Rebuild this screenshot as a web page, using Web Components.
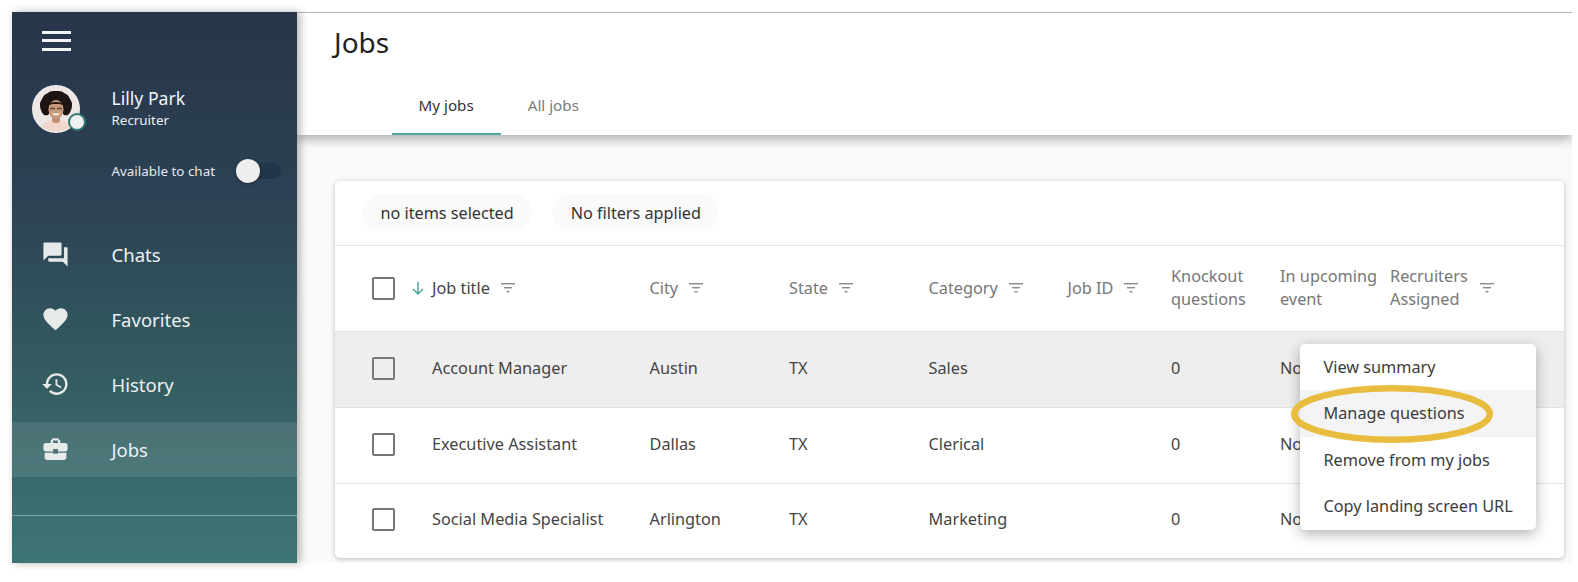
<!DOCTYPE html>
<html><head><meta charset="utf-8">
<style>
html,body{margin:0;padding:0;background:#fff;width:1578px;height:582px;overflow:hidden;font-family:"Noto Sans","Open Sans",sans-serif}
</style></head>
<body>
<jobs-app></jobs-app>
<script>
const FILTER='<svg width="16" height="12" viewBox="0 0 16 12" fill="#8a8a8a"><rect x="1" y="1" width="14" height="1.4"/><rect x="4" y="5" width="8" height="1.4"/><rect x="6.5" y="9" width="3" height="1.4"/></svg>';
function def(name,html){customElements.define(name,class extends HTMLElement{constructor(){super();this.attachShadow({mode:'open'}).innerHTML=html}})}

def('side-item',`<style>
:host{display:flex;align-items:center;height:55px;color:#eef1f1;font-size:18.5px;padding-left:29px;flex:none}
:host([active]){background:rgba(255,255,255,.1)}
.i{width:29px;height:29px;margin-right:42px;display:flex;align-items:center;justify-content:center;flex:none}
</style><span class="i"><slot name="icon"></slot></span><span><slot></slot></span>`);

def('app-sidebar',`<style>
:host{display:flex;flex-direction:column;width:285.5px;flex:none;background:linear-gradient(180deg,#28354a 0%,#2c4255 35%,#33595f 62%,#3d7574 100%);color:#fff;position:relative;z-index:3;box-shadow:3px 0 8px rgba(0,0,0,.3)}
.burger{margin:19px 0 0 30px;width:29px;height:20px;display:flex;flex-direction:column;justify-content:space-between}
.burger i{display:block;height:3px;background:#f2f4f6}
.user{display:flex;align-items:flex-start;margin-top:34px;padding-left:20px}
.av{position:relative;width:48px;height:48px;flex:none;margin-right:32px}
.dot{position:absolute;left:36px;top:28px;width:14px;height:14px;border-radius:50%;background:#edf0f0;border:2.5px solid #2f7a72}
.name{font-size:17.6px;line-height:24px;margin-top:1px;color:#f2f4f5}
.role{font-size:13.4px;line-height:20px;color:#eef1f2;padding-top:.5px}
.avail{display:flex;align-items:center;margin-top:24.5px;padding-left:100px;font-size:13.4px;color:#e6eaec;height:28px}
.track{position:relative;width:44px;height:16px;border-radius:8px;background:#21364a;margin-left:22px}
.knob{position:absolute;left:-1px;top:-4px;width:24px;height:24px;border-radius:50%;background:#eeeeee;box-shadow:0 1px 3px rgba(0,0,0,.4)}
nav{display:flex;flex-direction:column;margin-top:41.5px}
hr{border:0;border-top:1px solid rgba(255,255,255,.35);margin:38px 0 0}
side-item{margin-bottom:10px}
side-item:last-child{margin-bottom:0}
</style>
<div class="burger"><i></i><i></i><i></i></div>
<div class="user"><div class="av">
<svg width="48" height="48" viewBox="0 0 48 48"><defs><clipPath id="c"><circle cx="24" cy="24" r="22.5"/></clipPath></defs>
<circle cx="24" cy="24" r="24" fill="#f0ecea"/>
<g clip-path="url(#c)"><rect width="48" height="48" fill="#ece7e4"/>
<path d="M7 48c1-9 8-13 17-13s15 4 17 13z" fill="#f1d6c9"/>
<path d="M20 30h8v6c-1.5 3-6.5 3-8 0z" fill="#c2906f"/>
<path d="M8 19c0-2 1-3 2-5 1-3 3-5 6-6 2-2 5-2 8-2s6 0 8 2c3 1 5 3 6 6 1 2 2 3 2 5s0 4-1 6c-.5 2-2 4-3 5-1 0-4 1-5-1V22H17v7c-1 2-4 1-5 1-1-1-2.5-3-3-5-1-2-1-4-1-6z" fill="#1c1512"/>
<ellipse cx="24" cy="24.5" rx="7.5" ry="9.5" fill="#c99a7a"/>
<path d="M16 20c3-4 13-4 16 0-4-1.5-12-1.5-16 0z" fill="#1c1512"/>
<path d="M18 23.5h5M25 23.5h5" stroke="#5a4a44" stroke-width="1.3"/>
<path d="M20 28.5c2 2.5 6 2.5 8 0z" fill="#fbf6f3"/></g></svg>
<span class="dot"></span></div>
<div><div class="name">Lilly Park</div><div class="role">Recruiter</div></div></div>
<div class="avail"><span>Available to chat</span><span class="track"><span class="knob"></span></span></div>
<nav>
<side-item><svg slot="icon" width="33" height="33" viewBox="0 0 24 24" fill="#e6eaeb"><path d="M21 6h-2v9H6v2c0 .55.45 1 1 1h11l4 4V7c0-.55-.45-1-1-1zm-4 6V3c0-.55-.45-1-1-1H3c-.55 0-1 .45-1 1v14l4-4h10c.55 0 1-.45 1-1z"/></svg>Chats</side-item>
<side-item><svg slot="icon" width="34" height="34" viewBox="0 0 24 24" fill="#e6eaeb"><path d="M12 21.35l-1.45-1.32C5.4 15.36 2 12.28 2 8.5 2 5.42 4.42 3 7.5 3c1.74 0 3.41.81 4.5 2.09C13.09 3.81 14.76 3 16.5 3 19.58 3 22 5.42 22 8.5c0 3.78-3.4 6.86-8.55 11.54L12 21.35z"/></svg>Favorites</side-item>
<side-item><svg slot="icon" width="32" height="32" viewBox="0 0 24 24" fill="#e6eaeb"><path d="M13 3c-4.97 0-9 4.03-9 9H1l3.89 3.89.07.14L9 12H6c0-3.87 3.13-7 7-7s7 3.13 7 7-3.13 7-7 7c-1.93 0-3.68-.79-4.94-2.06l-1.42 1.42C8.27 19.99 10.51 21 13 21c4.97 0 9-4.03 9-9s-4.03-9-9-9zm-1 5v5l4.28 2.54.72-1.21-3.5-2.08V8H12z"/></svg>History</side-item>
<side-item active><svg slot="icon" width="34" height="34" viewBox="0 0 24 24" fill="#e6eaeb"><path d="M10 16v-1H3.01L3 19c0 1.11.89 2 2 2h14c1.11 0 2-.89 2-2v-4h-7v1h-4zm10-9h-4.01V5l-2-2h-4l-2 2v2H4c-1.1 0-2 .9-2 2v3c0 1.11.89 2 2 2h6v-2h4v2h6c1.1 0 2-.9 2-2V9c0-1.1-.9-2-2-2zm-6 0h-4V5h4v2z"/></svg>Jobs</side-item>
</nav>
<hr>`);

def('page-header',`<style>
:host{display:block;background:#fff;height:122px;box-shadow:0 4px 11px rgba(0,0,0,.32);position:relative;z-index:2;box-sizing:border-box;padding-left:37px;flex:none}
h1{margin:0;font-weight:400;font-size:28px;line-height:38px;padding-top:10px;color:#222}
.tabs{display:flex;margin:17px 0 0 57.5px}
</style><h1>Jobs</h1><div class="tabs"><slot></slot></div>`);

def('tab-item',`<style>
:host{display:block;box-sizing:border-box;height:57px;padding:0 27px;line-height:55px;font-size:15.2px;color:#7b7b7b;border-bottom:2px solid transparent}
:host([active]){color:#333;border-bottom-color:#4fa79c}
</style><slot></slot>`);

def('status-chip',`<style>
:host{display:inline-flex;align-items:center;height:37px;padding:0 18.5px;border-radius:19px;background:#fafafa;font-size:16.2px;color:#333}
</style><slot></slot>`);

def('check-box',`<style>
:host{display:block;box-sizing:border-box;width:23px;height:23px;border:2px solid #777;border-radius:2px}
</style>`);

const COLS='grid-template-columns:60px 217.5px 139.5px 139.5px 139px 103.5px 109px 110px 1fr';
def('job-head',`<style>
:host{display:grid;${COLS};align-items:center;height:85px;padding-left:37px;font-size:16.3px;color:#777;line-height:23px;box-sizing:border-box}
.c{display:flex;align-items:center;gap:10px}
.s{display:flex;align-items:center;gap:15px}
.t{color:#444}
</style>
<div class="s"><check-box></check-box><svg width="16" height="16" viewBox="0 0 16 16" fill="none" stroke="#4fa79c" stroke-width="1.5" style="margin-right:-16px;flex:none"><path d="M8 2v12M3 9l5 5 5-5"/></svg></div>
<div class="c t">Job title ${FILTER}</div>
<div class="c">City ${FILTER}</div>
<div class="c">State ${FILTER}</div>
<div class="c">Category ${FILTER}</div>
<div class="c">Job ID ${FILTER}</div>
<div>Knockout<br>questions</div>
<div>In upcoming<br>event</div>
<div class="c" style="gap:11px"><div>Recruiters<br>Assigned</div>${FILTER}</div>`);

def('job-row',`<style>
:host{display:grid;${COLS};align-items:center;padding:0 0 2px 37px;font-size:16.3px;color:#444;box-sizing:border-box;height:76px;border-top:1px solid #e4e4e4}
:host([hi]){background:#eeeeee}
:host(:last-child){height:75px;padding-bottom:2.5px}
</style>
<div><check-box></check-box></div>
<div><slot name="title"></slot></div><div><slot name="city"></slot></div><div>TX</div><div><slot name="cat"></slot></div><div></div><div>0</div><div>No</div><div></div>`);

def('context-menu',`<style>
:host{position:absolute;left:1300px;top:343.5px;width:236px;background:#fff;border-radius:5px;box-shadow:0 4px 14px rgba(0,0,0,.3);z-index:5;display:flex;flex-direction:column}
.e{position:absolute;left:-9px;top:41px;width:202px;height:58px;pointer-events:none}
</style><slot></slot>
<svg class="e" viewBox="0 0 202 58" fill="none"><ellipse cx="101" cy="29" rx="97.75" ry="25.75" stroke="#e8bc3e" stroke-width="6.5"/></svg>`);

def('menu-item',`<style>
:host{display:block;height:46.5px;line-height:46px;padding-left:23.5px;font-size:16.25px;color:#3b3b3b;white-space:nowrap}
:host([hi]){background:#f4f4f4}
</style><slot></slot>`);

def('jobs-card',`<style>
:host{display:block;background:#fff;border-radius:5px;box-shadow:0 1px 5px rgba(0,0,0,.25);margin:46px 0 0 38px;width:1229px;flex:none}
.bar{display:flex;gap:20px;align-items:center;height:65px;padding-left:27px;border-bottom:1px solid #e6e6e6;box-sizing:border-box}
</style><div class="bar"><slot name="chips"></slot></div><slot></slot>`);

def('jobs-app',`<style>
:host{display:flex;position:relative;width:1578px;height:582px;box-sizing:border-box;padding:11.5px 0 19px 11.5px}
.main{flex:none;width:1274.5px;border-top:1.5px solid #b5b5b5;background:#fafafa;display:flex;flex-direction:column;overflow:hidden;height:551px;box-sizing:border-box}
</style>
<app-sidebar></app-sidebar>
<div class="main">
<page-header><tab-item active>My jobs</tab-item><tab-item>All jobs</tab-item></page-header>
<jobs-card>
<status-chip slot="chips">no items selected</status-chip><status-chip slot="chips">No filters applied</status-chip>
<job-head></job-head>
<job-row hi><span slot="title">Account Manager</span><span slot="city">Austin</span><span slot="cat">Sales</span></job-row>
<job-row><span slot="title">Executive Assistant</span><span slot="city">Dallas</span><span slot="cat">Clerical</span></job-row>
<job-row><span slot="title">Social Media Specialist</span><span slot="city">Arlington</span><span slot="cat">Marketing</span></job-row>
</jobs-card>
</div>
<context-menu><menu-item>View summary</menu-item><menu-item hi>Manage questions</menu-item><menu-item>Remove from my jobs</menu-item><menu-item>Copy landing screen URL</menu-item></context-menu>`);
</script>
</body></html>
